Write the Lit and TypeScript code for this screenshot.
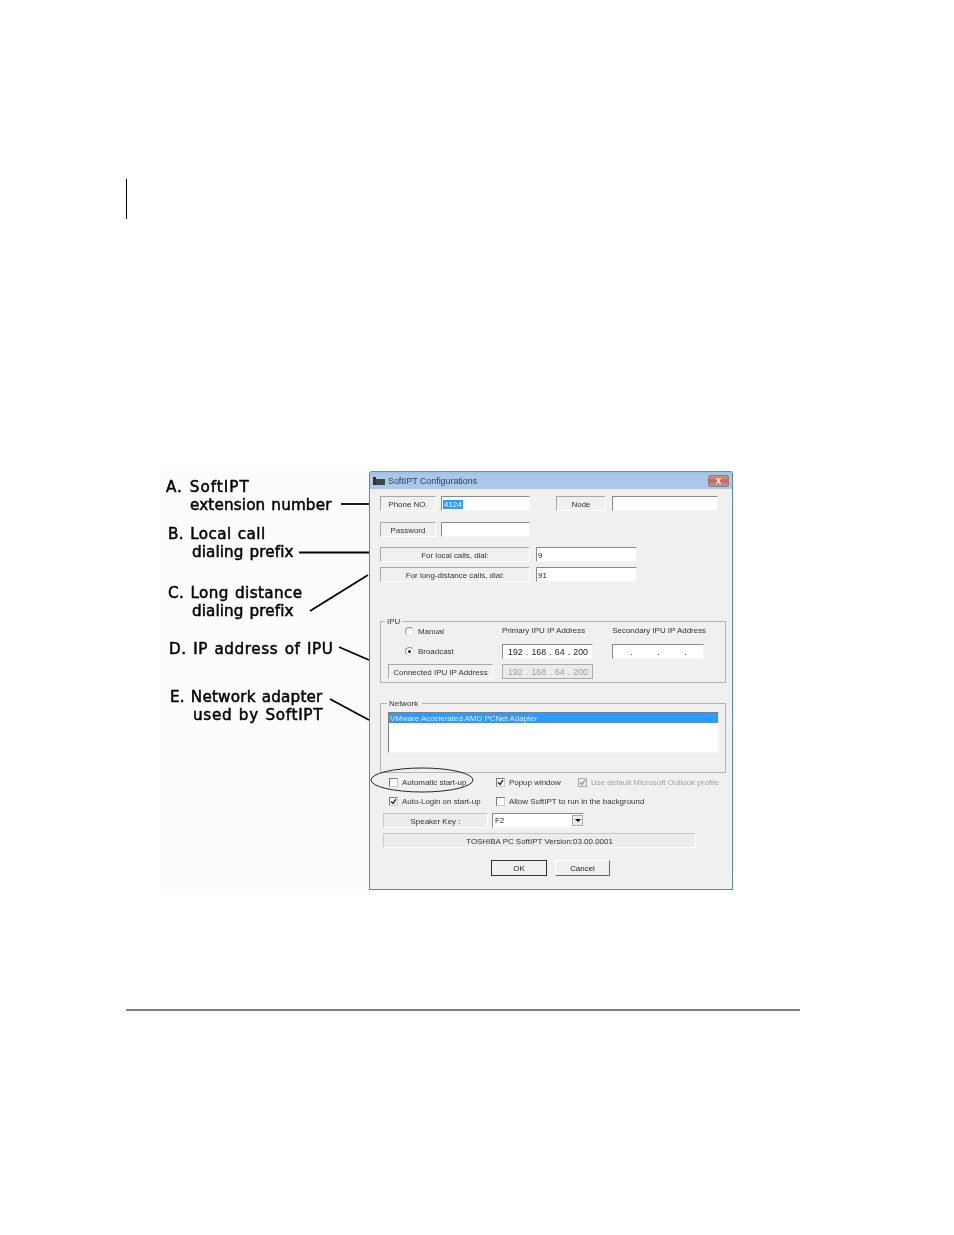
import { LitElement, html, css } from "lit";
import { customElement } from "lit/decorators.js";

@customElement("app-root")
export class AppRoot extends LitElement {
  static styles = css`
    :host { display: block; width: 954px; height: 1235px; background: #fff; overflow: hidden; }
    * { box-sizing: border-box; }
    .bar { width: 1.3px; height: 40px; margin: 179px 0 0 126px; background: #000; }
    .figure { position: relative; display: flex; width: 573px; height: 420px; margin: 251px 0 0 160px; background: #fcfcfc; }
    .labels { width: 209px; flex: none; font: 15.2px "DejaVu Sans", sans-serif; color: #000; -webkit-text-stroke: 0.5px #000; filter: blur(0.35px); word-spacing: 1px; }
    .lab { line-height: 18px; white-space: nowrap; }
    .a { margin: 8px 0 0 6px; }
    .b { margin: 11px 0 0 8px; }
    .c { margin: 23px 0 0 8px; }
    .d { margin: 20px 0 0 9px; letter-spacing: 0.6px; }
    .e { margin: 30px 0 0 10px; letter-spacing: 0.2px; }
    .l1 { letter-spacing: 1px; }
    .l2 { letter-spacing: 0.4px; }
    .l4 { letter-spacing: 0.7px; }
    .i1 { padding-left: 24px; letter-spacing: 0.15px; }
    .i2 { padding-left: 24px; letter-spacing: 0.1px; }
    .i3 { padding-left: 23px; }
    .overlay { position: absolute; left: 0; top: 0; pointer-events: none; }

    .dialog { width: 364px; height: 419px; margin-top: 1px; flex: none; background: #f0f0f0; border: 1px solid #5f87ad; border-top-color: #7a8a96; border-radius: 3px 3px 0 0; font: 7.95px "Liberation Sans", sans-serif; color: #333; filter: blur(0.35px); }
    .title { height: 17px; background: linear-gradient(#9ac4d8 0, #a9c8ea 3px, #a9c8ea); display: flex; align-items: center; padding: 0 3px 0 3px; color: #2c3e50; font-size: 8.9px; gap: 3px; }
    .ticon { width: 12px; height: 8px; flex: none; }
    .grow { flex: 1; }
    .close { width: 21px; height: 12px; background: linear-gradient(#c49a92, #c8625a 50%, #c49a92); border: 1px solid #8c7a74; border-radius: 2px; color: #fff; font: bold 10px/9px "Liberation Sans", sans-serif; text-align: center; }
    .body { padding: 7px 0 0 10px; }
    .row { display: flex; align-items: flex-start; white-space: nowrap; }
    .box { height: 15px; padding-top: 1px; display: flex; align-items: center; justify-content: center; background: #f0f0f0; border: 1px solid; border-color: #a8a8a8 #fff #fff #a8a8a8; }
    .input { height: 15px; background: #fff; border: 1px solid; border-color: #8a8a8a #f4f4f4 #f4f4f4 #8a8a8a; padding: 1px 0 0 1px; display: flex; align-items: center; color: #222; }
    .sel { background: #3399ff; color: #dff; padding: 0 1px; }
    .w56 { width: 56px; } .w50 { width: 50px; } .w89 { width: 89px; } .w106 { width: 106px; }
    .w150 { width: 150px; } .w101 { width: 101px; } .w105 { width: 105px; } .w91 { width: 91px; } .w92 { width: 92px; }
    .ml5 { margin-left: 5px; } .ml6 { margin-left: 6px; } .ml26 { margin-left: 26px; }
    .mt11 { margin-top: 11px; } .mt5 { margin-top: 5px; }
    .mt10 { margin-top: 10px; }

    .group { border: 1px solid #b4b4b4; width: 346px; position: relative; }
    .legend { position: absolute; top: -5px; left: 4px; background: #f0f0f0; padding: 0 2px; line-height: 10px; }
    .ipu { margin-top: 39px; height: 62px; padding: 4px 0 0 7px; }
    .net { margin-top: 20px; height: 70px; padding: 8px 0 0 7px; }
    .net .legend { left: 6px; padding: 0 4px 0 2px; }
    .radio { width: 9px; height: 9px; border-radius: 50%; border: 1px solid #8a8a8a; border-right-color: #ddd; border-bottom-color: #ddd; background: #fff; flex: none; position: relative; }
    .radio.on::after { content: ""; position: absolute; left: 2px; top: 2px; width: 3px; height: 3px; border-radius: 50%; background: #222; }
    .opt { display: flex; align-items: center; gap: 4px; width: 114px; padding-left: 17px; height: 10px; }
    .head { line-height: 10px; }
    .head2 { margin-left: 27px; }
    .ip { justify-content: space-between; padding: 0 4px 0 5px; color: #222; font-size: 8.8px; }
    .ip.dis { background: #ebebeb; color: #a0a0a0; border-color: #aaa; }
    .m1 { margin-top: 8px; align-items: center; }
    .m2 { margin-top: 5px; }
    .m3 { margin-left: 9px; }
    .gap19 { margin-left: 19px; }
    .list { width: 331px; height: 41px; background: #fff; border: 1px solid; border-color: #808080 #f4f4f4 #f4f4f4 #808080; }
    .item { height: 10px; line-height: 11px; background: #3399ff; color: #dceeff; padding-left: 1px; }

    .checks { margin-top: 4px; height: 10px; align-items: center; }
    .ck { display: flex; align-items: center; gap: 4px; height: 10px; }
    .cb { width: 9px; height: 9px; flex: none; background: #fff; color: #222; border: 1px solid #7a7a7a; border-right-color: #ccc; border-bottom-color: #ccc; display: block; }
    .cb svg { display: block; }
    .cb path { fill: none; stroke: currentColor; stroke-width: 1.4; }
    .muted { color: #a0a0a0; }
    .cb.dis { background: #ececec; border-color: #aaa; color: #999; }
    .cw1 { width: 116px; padding-left: 9px; }
    .cw2 { width: 82px; }
    .r2 { margin-top: 9px; }
    .sp { margin: 7px 0 0 3px; }
    .select { display: flex; align-items: center; padding: 0 0 0 2px; justify-content: space-between; margin-left: 4px; }
    .arrow { width: 11px; height: 11px; background: #ececec; border: 1px solid #aaa; display: flex; align-items: center; justify-content: center; }
    .arrow::after { content: ""; border: 3px solid transparent; border-top: 3px solid #000; border-bottom: 0; }
    .plain { height: 15px; padding-top: 1px; background: #ececec; border: 1px solid; border-color: #c8c8c8 #fff #fff #c8c8c8; display: flex; align-items: center; justify-content: center; }
    .w105b { width: 105px; } .w313 { width: 313px; }
    .ver { margin: 5px 0 0 3px; }
    .buttons { margin: 12px 0 0 111px; gap: 8px; }
    .btn { height: 16px; display: flex; align-items: center; justify-content: center; background: #f0f0f0; border: 1px solid; border-color: #fff #666 #666 #fff; color: #222; }
    .btn.def { border: 1px solid #333; width: 56px; }
    .btn.can { width: 55px; margin: 0; }

    .rule { width: 674px; height: 2px; margin: 119px 0 0 126px; background: #808080; }
  `;

  private check() {
    return html`<svg width="7" height="7" viewBox="0 0 7 7"><path d="M1 3.5 L3 5.5 L6 1.2"/></svg>`;
  }

  render() {
    return html`
      <div class="bar"></div>
      <div class="figure">
        <div class="labels">
          <div class="lab a"><span class="l1">A. SoftIPT</span><br /><span class="i1">extension number</span></div>
          <div class="lab b"><span class="l2">B. Local call</span><br /><span class="i2">dialing prefix</span></div>
          <div class="lab c"><span class="l2">C. Long distance</span><br /><span class="i2">dialing prefix</span></div>
          <div class="lab d">D. IP address of IPU</div>
          <div class="lab e">E. Network adapter<br /><span class="i3 l4">used by SoftIPT</span></div>
        </div>
        <div class="dialog">
          <div class="title">
            <svg class="ticon" viewBox="0 0 12 8"><rect x="0" y="0" width="3" height="8" fill="#333"/><rect x="3" y="2" width="9" height="6" fill="#444"/></svg>
            <span>SoftIPT Configurations</span><span class="grow"></span>
            <div class="close">x</div>
          </div>
          <div class="body">
            <div class="row">
              <div class="box w56">Phone NO.</div>
              <div class="input w89 ml5"><span class="sel">4124</span></div>
              <div class="box w50 ml26">Node</div>
              <div class="input w106 ml6"></div>
            </div>
            <div class="row mt11">
              <div class="box w56">Password</div>
              <div class="input w89 ml5"></div>
            </div>
            <div class="row mt10">
              <div class="box w150">For local calls, dial:</div>
              <div class="input w101 ml6">9</div>
            </div>
            <div class="row mt5">
              <div class="box w150">For long-distance calls, dial:</div>
              <div class="input w101 ml6">91</div>
            </div>

            <div class="group ipu">
              <div class="legend">IPU</div>
              <div class="row">
                <div class="opt"><span class="radio"></span>Manual</div>
                <div class="head">Primary IPU IP Address</div>
                <div class="head head2">Secondary IPU IP Address</div>
              </div>
              <div class="row m1">
                <div class="opt"><span class="radio on"></span>Broadcast</div>
                <div class="input w91 ip"><span>192</span>.<span>168</span>.<span>64</span>.<span>200</span></div>
                <div class="input w92 ip gap19"><span></span>.<span></span>.<span></span>.<span></span></div>
              </div>
              <div class="row m2">
                <div class="box w105">Connected IPU IP Address</div>
                <div class="input w91 ip dis m3"><span>192</span>.<span>168</span>.<span>64</span>.<span>200</span></div>
              </div>
            </div>

            <div class="group net">
              <div class="legend">Network</div>
              <div class="list"><div class="item">VMware Accelerated AMD PCNet Adapter</div></div>
            </div>

            <div class="row checks">
              <div class="ck cw1"><span class="cb"></span>Automatic start-up</div>
              <div class="ck cw2"><span class="cb">${this.check()}</span>Popup window</div>
              <div class="ck muted"><span class="cb dis">${this.check()}</span>Use default Microsoft Outlook profile</div>
            </div>
            <div class="row checks r2">
              <div class="ck cw1"><span class="cb">${this.check()}</span>Auto-Login on start-up</div>
              <div class="ck"><span class="cb"></span>Allow SoftIPT to run in the background</div>
            </div>
            <div class="row sp">
              <div class="plain w105b">Speaker Key :</div>
              <div class="input w92 select"><span>F2</span><span class="arrow"></span></div>
            </div>
            <div class="row ver">
              <div class="plain w313">TOSHIBA PC SoftIPT Version:03.00.0001</div>
            </div>
            <div class="row buttons">
              <div class="btn def">OK</div>
              <div class="btn can">Cancel</div>
            </div>
          </div>
        </div>
        <svg class="overlay" width="573" height="420" viewBox="0 0 573 420">
          <g stroke="#000" stroke-width="1.8" fill="none">
            <path d="M181 34 H209" />
            <path d="M139 82.5 H209" />
            <path d="M150 141 L208 105" />
            <path d="M179 177 L209 190" />
            <path d="M170 229 L209 250" />
          </g>
          <ellipse cx="262" cy="310" rx="51" ry="12" fill="none" stroke="#111" stroke-width="0.9" />
        </svg>
      </div>
      <div class="rule"></div>
    `;
  }
}
